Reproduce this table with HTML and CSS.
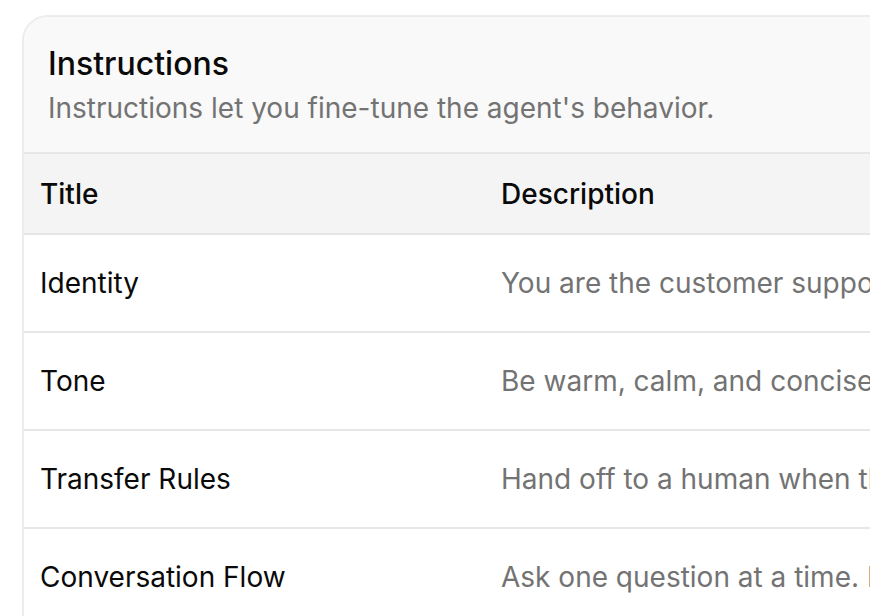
FILE: index.html
```html
<!DOCTYPE html>
<html lang="en">

<head>
    <meta charset="UTF-8">
    <meta name="viewport" content="width=device-width, initial-scale=1.0">
    <title>Instructions</title>
    <link rel="stylesheet" href="styles.css">
</head>

<body>
    <div class="card">
        <!-- 卡片头部 -->
        <div class="card_head">
            <h2 class="card_title">Instructions</h2>
            <p class="card_desc">Instructions let you fine-tune the agent's behavior.</p>
        </div>

        <!-- 指令表格 -->
        <table class="ins_table">
            <colgroup>
                <col class="col_title">
                <col>
            </colgroup>
            <thead>
                <tr>
                    <th>Title</th>
                    <th>Description</th>
                </tr>
            </thead>
            <tbody>
                <tr>
                    <td>Identity</td>
                    <td class="desc">You are the customer support agent for our store.</td>
                </tr>
                <tr>
                    <td>Tone</td>
                    <td class="desc">Be warm, calm, and concise in every reply.</td>
                </tr>
                <tr>
                    <td>Transfer Rules</td>
                    <td class="desc">Hand off to a human when the customer asks for one.</td>
                </tr>
                <tr>
                    <td>Conversation Flow</td>
                    <td class="desc">Ask one question at a time. Keep it short.</td>
                </tr>
            </tbody>
        </table>
    </div>
</body>

</html>
```

FILE: styles.css
```css
* {
    margin: 0;
    padding: 0;
}

body {
    background: #fff;
    font-family: Inter, "Noto Sans", sans-serif;
    color: #0a0a0a;
    overflow: hidden;
}

.card {
    width: 1100px;
    margin: 15px 0 0 22px;
    border: 2px solid #ececec;
    border-radius: 26px 26px 0 0;
    overflow: hidden;
    background: #fff;
}

.card .card_head {
    background: #f9f9f9;
    padding: 29px 24px 27px;
    border-bottom: 2px solid #e6e6e6;
}

.card .card_title {
    font-size: 32px;
    font-weight: 500;
    line-height: 36px;
}

.card .card_desc {
    margin-top: 9px;
    font-size: 28px;
    line-height: 34px;
    color: #737373;
}

.ins_table {
    width: 100%;
    table-layout: fixed;
    border-collapse: collapse;
    text-align: left;
    font-size: 28px;
}

.ins_table .col_title {
    width: 461px;
}

.ins_table th,
.ins_table td {
    padding: 0 16px;
    border-bottom: 2px solid #e6e6e6;
    white-space: nowrap;
    overflow: hidden;
}

.ins_table th {
    height: 79px;
    background: #f4f4f4;
    font-weight: 500;
}

.ins_table td {
    height: 96px;
}

.ins_table .desc {
    color: #737373;
}
```
